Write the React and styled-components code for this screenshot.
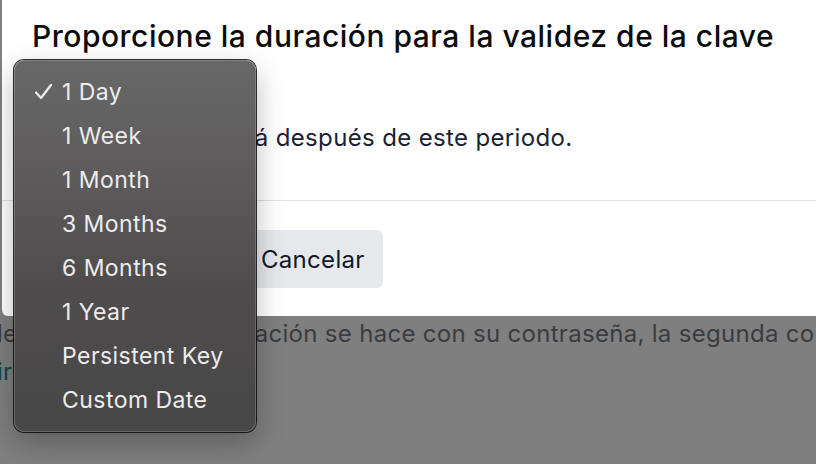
import React from "react";
import styled, { createGlobalStyle } from "styled-components";

const GlobalStyle = createGlobalStyle`
  html, body {
    margin: 0;
    padding: 0;
    background: #7f7f7f;
  }
  body {
    font-family: Inter, "Noto Sans", "Liberation Sans", sans-serif;
  }
`;

const StyledPage = styled.div`
  position: relative;
  width: 816px;
  height: 464px;
  overflow: hidden;
  background: #7f7f7f;
`;

const StyledDialog = styled.div`
  margin-left: 2px;
  height: 316px;
  background: #ffffff;
  border-bottom-left-radius: 6px;
  display: flex;
  flex-direction: column;
`;

const DialogHeader = styled.div`
  padding: 17px 30px 0;
`;

const DialogTitle = styled.h2`
  margin: 0;
  font-size: 30px;
  line-height: 38px;
  font-weight: 500;
  color: #0b0b0c;
  white-space: nowrap;
  letter-spacing: 0.5px;
`;

const DialogBody = styled.div`
  padding: 0 30px;
  height: 145px;
  display: flex;
  flex-direction: column;
  gap: 12px;
`;

const SelectBox = styled.div`
  margin-top: 18px;
  width: 200px;
  height: 36px;
  border: 1px solid #d1d5db;
  border-radius: 6px;
`;

const Description = styled.p`
  margin: 0;
  padding-left: 2px;
  font-size: 24px;
  line-height: 30px;
  letter-spacing: 0.35px;
  color: #1a2233;
  white-space: nowrap;
`;

const Divider = styled.div`
  height: 1px;
  background: #e1e1e3;
`;

const DialogFooter = styled.div`
  padding: 29px 30px 0;
  display: flex;
  gap: 12px;
`;

const Button = styled.button`
  height: 58px;
  min-width: ${(p) => (p.primary ? "199px" : "0")};
  padding: 0 18px;
  border: none;
  border-radius: 6px;
  font-family: inherit;
  font-size: 24px;
  letter-spacing: 0.3px;
  color: ${(p) => (p.primary ? "#ffffff" : "#111827")};
  background: ${(p) => (p.primary ? "#0f766e" : "#e7e8ec")};
`;

const BehindText = styled.div`
  margin-top: -1px;
  margin-left: -3px;
  font-size: 24px;
  line-height: 38px;
  letter-spacing: 0.3px;
  color: #3a3c41;
  white-space: nowrap;
`;

const BehindLink = styled.div`
  color: #17474a;
`;

const StyledMenu = styled.div`
  position: absolute;
  left: 14px;
  top: 60px;
  width: 242px;
  box-sizing: border-box;
  padding: 10px 0;
  border-radius: 10px;
  background: linear-gradient(180deg, #686868 0%, #5c595a 35%, #504c4d 60%, #474747 100%);
  box-shadow: 0 0 0 1px rgba(10, 10, 10, 0.85),
    inset 0 0 0 1px rgba(255, 255, 255, 0.18),
    0 10px 28px rgba(0, 0, 0, 0.28);
`;

const MenuItem = styled.div`
  display: flex;
  align-items: center;
  height: 44px;
  padding-left: 48px;
  position: relative;
  font-size: 23px;
  letter-spacing: 0.45px;
  color: #ececec;
  white-space: nowrap;
`;

const CheckMark = styled.svg`
  position: absolute;
  left: 20px;
  top: 13px;
  width: 19px;
  height: 17px;
`;

const options = [
  "1 Day",
  "1 Week",
  "1 Month",
  "3 Months",
  "6 Months",
  "1 Year",
  "Persistent Key",
  "Custom Date",
];

function DurationMenu({ selected }) {
  return (
    <StyledMenu>
      {options.map((opt) => (
        <MenuItem key={opt}>
          {opt === selected && (
            <CheckMark viewBox="0 0 19 17">
              <path
                d="M2 9.5 L7 15 L17 2"
                fill="none"
                stroke="#ececec"
                strokeWidth="2.3"
                strokeLinecap="round"
                strokeLinejoin="round"
              />
            </CheckMark>
          )}
          {opt}
        </MenuItem>
      ))}
    </StyledMenu>
  );
}

export default function App() {
  return (
    <>
      <GlobalStyle />
      <StyledPage>
        <StyledDialog>
          <DialogHeader>
            <DialogTitle>Proporcione la duración para la validez de la clave</DialogTitle>
          </DialogHeader>
          <DialogBody>
            <SelectBox />
            <Description>Esta clave caducará después de este periodo.</Description>
          </DialogBody>
          <Divider />
          <DialogFooter>
            <Button primary>Confirmar</Button>
            <Button>Cancelar</Button>
          </DialogFooter>
        </StyledDialog>
        <BehindText>
          <div>le. Una primera verificación se hace con su contraseña, la segunda con su dispositivo</div>
          <BehindLink>ir a configuración</BehindLink>
        </BehindText>
        <DurationMenu selected="1 Day" />
      </StyledPage>
    </>
  );
}
